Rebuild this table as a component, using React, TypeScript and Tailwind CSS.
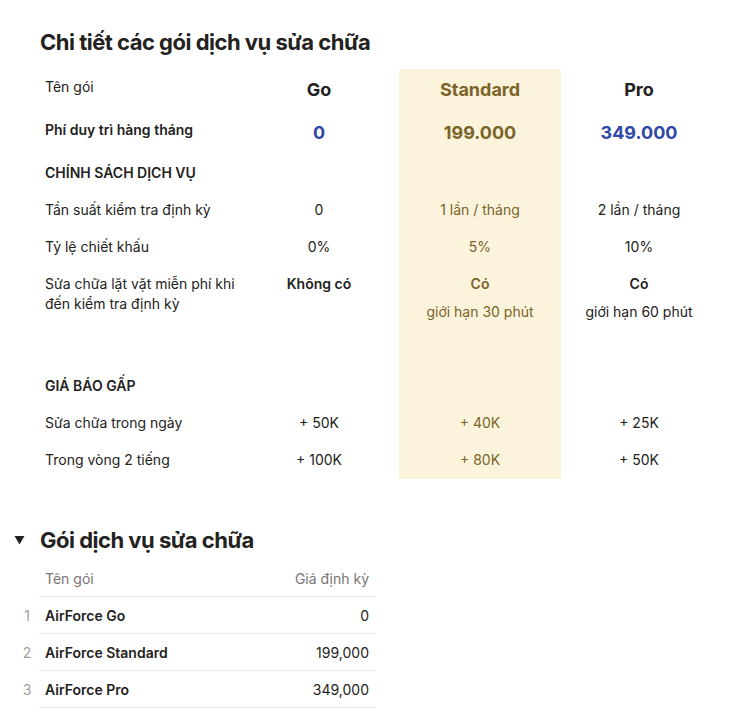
import React from 'react'

type Cell = { main?: string; sub?: string; bold?: boolean; big?: boolean; blue?: boolean }
type Row = { label?: string; labelBold?: boolean; h: string; pt: string; cells: Cell[] }

const rows: Row[] = [
  {
    label: 'Tên gói',
    h: 'h-[42px]',
    pt: 'pt-2',
    cells: [
      { main: 'Go', bold: true, big: true },
      { main: 'Standard', bold: true, big: true },
      { main: 'Pro', bold: true, big: true },
    ],
  },
  {
    label: 'Phí duy trì hàng tháng',
    labelBold: true,
    h: 'h-[42px]',
    pt: 'pt-[9px]',
    cells: [
      { main: '0', bold: true, big: true, blue: true },
      { main: '199.000', bold: true, big: true },
      { main: '349.000', bold: true, big: true, blue: true },
    ],
  },
  { label: 'CHÍNH SÁCH DỊCH VỤ', labelBold: true, h: 'h-[39px]', pt: 'pt-[10px]', cells: [{}, {}, {}] },
  {
    label: 'Tần suất kiểm tra định kỳ',
    h: 'h-[37px]',
    pt: 'pt-2',
    cells: [{ main: '0' }, { main: '1 lần / tháng' }, { main: '2 lần / tháng' }],
  },
  {
    label: 'Tỷ lệ chiết khấu',
    h: 'h-[37px]',
    pt: 'pt-2',
    cells: [{ main: '0%' }, { main: '5%' }, { main: '10%' }],
  },
  {
    label: 'Sửa chữa lặt vặt miễn phí khi đến kiểm tra định kỳ',
    h: 'h-[65px]',
    pt: 'pt-2',
    cells: [
      { main: 'Không có', bold: true },
      { main: 'Có', bold: true, sub: 'giới hạn 30 phút' },
      { main: 'Có', bold: true, sub: 'giới hạn 60 phút' },
    ],
  },
  { h: 'h-[37px]', pt: 'pt-2', cells: [{}, {}, {}] },
  { label: 'GIÁ BÁO GẤP', labelBold: true, h: 'h-[37px]', pt: 'pt-2', cells: [{}, {}, {}] },
  {
    label: 'Sửa chữa trong ngày',
    h: 'h-[37px]',
    pt: 'pt-2',
    cells: [{ main: '+ 50K' }, { main: '+ 40K' }, { main: '+ 25K' }],
  },
  {
    label: 'Trong vòng 2 tiếng',
    h: 'h-[37px]',
    pt: 'pt-2',
    cells: [{ main: '+ 100K' }, { main: '+ 80K' }, { main: '+ 50K' }],
  },
]

const packages = [
  { n: 1, name: 'AirForce Go', price: '0' },
  { n: 2, name: 'AirForce Standard', price: '199,000' },
  { n: 3, name: 'AirForce Pro', price: '349,000' },
]

function ValueCell({ cell, pt, highlight }: { cell: Cell; pt: string; highlight?: boolean }) {
  const color = cell.blue ? 'text-[#2f47a6]' : highlight ? 'text-[#7a6429]' : 'text-[#232220]'
  return (
    <div className={`${pt} px-2 text-center ${highlight ? 'bg-[#fbf3db]' : ''}`}>
      {cell.main && (
        <div
          className={`${cell.big ? 'text-[18px] leading-[26px] font-bold' : 'text-[14px] leading-5'} ${
            cell.bold && !cell.big ? 'font-semibold' : ''
          } ${color}`}
        >
          {cell.main}
        </div>
      )}
      {cell.sub && <div className={`mt-2 text-[14px] leading-5 ${color}`}>{cell.sub}</div>}
    </div>
  )
}

export default function App() {
  return (
    <div className="w-[733px] min-h-[724px] bg-white pt-[27px] font-['Inter',sans-serif] text-[#232220]">
      <h1 className="ml-10 text-[22px] leading-[30px] font-bold tracking-[-0.5px]">
        Chi tiết các gói dịch vụ sửa chữa
      </h1>

      <div className="ml-[39px] mt-3">
        {rows.map((row, i) => (
          <div key={i} className={`grid grid-cols-[200px_160px_162px_156px] ${row.h}`}>
            <div
              className={`${row.pt} pl-[6px] text-[14px] leading-5 ${row.labelBold ? 'font-semibold' : ''}`}
            >
              {row.label}
            </div>
            {row.cells.map((c, j) => (
              <ValueCell key={j} cell={c} pt={row.pt} highlight={j === 1} />
            ))}
          </div>
        ))}
      </div>

      <div className="mt-[46px] flex items-center pl-[14px]">
        <svg width="11" height="10" viewBox="0 0 11 10" className="text-[#232220]">
          <path d="M0.5 1 L10.5 1 L5.5 9.5 Z" fill="currentColor" />
        </svg>
        <h2 className="ml-[15px] text-[22px] leading-[30px] font-bold tracking-[-0.5px]">Gói dịch vụ sửa chữa</h2>
      </div>

      <div className="mt-[5px] pl-[15px]">
        <div className="flex">
          <div className="w-6" />
          <div className="flex h-[37px] w-[337px] items-start justify-between border-b border-[#e9e9e7] pt-[9px] text-[14px] leading-5 text-[#787774]">
            <span className="pl-[6px]">Tên gói</span>
            <span className="pr-[7px]">Giá định kỳ</span>
          </div>
        </div>
        {packages.map((p) => (
          <div key={p.n} className="flex">
            <div className="w-6 pt-[9px] text-center text-[14px] leading-5 text-[#a19f9a]">{p.n}</div>
            <div className="flex h-[37px] w-[337px] items-start justify-between border-b border-[#e9e9e7] pt-[9px] text-[14px] leading-5">
              <span className="pl-[6px] font-semibold">{p.name}</span>
              <span className="pr-[7px]">{p.price}</span>
            </div>
          </div>
        ))}
      </div>
    </div>
  )
}
